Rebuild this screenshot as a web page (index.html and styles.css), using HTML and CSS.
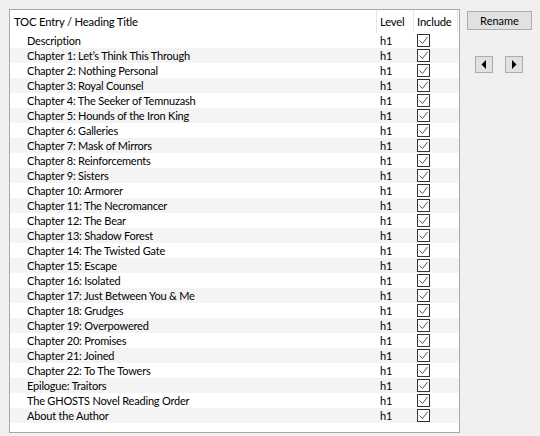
FILE: index.html
```html
<!DOCTYPE html>
<html>
<head>
<meta charset="utf-8">
<link rel="stylesheet" href="styles.css">
</head>
<body>
<div class="app">
  <div class="list">
    <div class="head">
      <div class="c-title">TOC Entry / Heading Title</div>
      <div class="c-level">Level</div>
      <div class="c-inc">Include</div>
      <div class="c-rest"></div>
    </div>
    <div class="rows" id="rows"></div>
  </div>
  <div class="side">
    <button class="btn rename">Rename</button>
    <div class="arrows">
      <button class="btn arrow"><svg width="6" height="9" viewBox="0 0 6 9"><polygon points="5,0 5,9 0.5,4.5" fill="#000"/></svg></button>
      <button class="btn arrow"><svg width="6" height="9" viewBox="0 0 6 9"><polygon points="1,0 1,9 5.5,4.5" fill="#000"/></svg></button>
    </div>
  </div>
</div>
<script src="app.js"></script>
</body>
</html>
```
FILE: app.js
```js
var items = [
  "Description",
  "Chapter 1: Let\u2019s Think This Through",
  "Chapter 2: Nothing Personal",
  "Chapter 3: Royal Counsel",
  "Chapter 4: The Seeker of Temnuzash",
  "Chapter 5: Hounds of the Iron King",
  "Chapter 6: Galleries",
  "Chapter 7: Mask of Mirrors",
  "Chapter 8: Reinforcements",
  "Chapter 9: Sisters",
  "Chapter 10: Armorer",
  "Chapter 11: The Necromancer",
  "Chapter 12: The Bear",
  "Chapter 13: Shadow Forest",
  "Chapter 14: The Twisted Gate",
  "Chapter 15: Escape",
  "Chapter 16: Isolated",
  "Chapter 17: Just Between You & Me",
  "Chapter 18: Grudges",
  "Chapter 19: Overpowered",
  "Chapter 20: Promises",
  "Chapter 21: Joined",
  "Chapter 22: To The Towers",
  "Epilogue: Traitors",
  "The GHOSTS Novel Reading Order",
  "About the Author"
];
var rows = document.getElementById("rows");
var check = '<svg width="11" height="11" viewBox="0 0 11 11"><polyline points="1.5,5.5 4.5,8.5 9.5,2" fill="none" stroke="#555" stroke-width="1"/></svg>';
items.forEach(function (t) {
  var r = document.createElement("div");
  r.className = "row";
  r.innerHTML = '<div class="c-title"></div><div class="c-level">h1</div><div class="c-inc"><span class="cb">' + check + '</span></div>';
  r.firstChild.textContent = t;
  rows.appendChild(r);
});
```
FILE: styles.css
```css
html, body {
  margin: 0;
  padding: 0;
  background: #f0f0f0;
}
body {
  font-family: Lato, "Noto Sans", sans-serif;
  font-size: 11px;
  letter-spacing: -0.2px;
  color: #000;
}
.app {
  display: flex;
  padding: 9px 0 0 9px;
  gap: 7px;
}
.list {
  width: 449px;
  height: 422px;
  border: 1px solid #a8a8a8;
  background: #fff;
  box-sizing: content-box;
  overflow: hidden;
}
.head {
  display: flex;
  height: 23px;
  align-items: stretch;
  font-size: 11.3px;
}
.head > div {
  display: flex;
  align-items: center;
  border-right: 1px solid #e5e5e5;
  box-sizing: border-box;
  line-height: 14px;
}
.head .c-title {
  width: 367px;
  padding-left: 4px;
}
.head .c-level {
  width: 37px;
  padding-left: 3px;
}
.head .c-inc {
  width: 44px;
  padding-left: 3px;
}
.head .c-rest {
  flex: 1;
  border-right: none;
}
.row {
  display: flex;
  height: 15px;
  align-items: center;
}
.row > div {
  line-height: 14px;
  box-sizing: border-box;
}
.row:nth-child(even) {
  background: #f4f4f4;
}
.row .c-title {
  width: 367px;
  padding-left: 17px;
  white-space: nowrap;
}
.row .c-level {
  width: 37px;
  padding-left: 3px;
}
.row .c-inc {
  width: 44px;
  padding-left: 3px;
  display: flex;
  align-items: center;
}
.cb {
  width: 13px;
  height: 13px;
  border: 1px solid #333;
  box-sizing: border-box;
  background: #fff;
  display: flex;
  align-items: center;
  justify-content: center;
}
.side {
  display: flex;
  flex-direction: column;
  padding-top: 2px;
}
.btn {
  font-family: inherit;
  font-size: 11px;
  letter-spacing: 0;
  background: #e1e1e1;
  border: 1px solid #adadad;
  padding: 0;
  margin: 0;
  color: #000;
}
.rename {
  width: 65px;
  height: 19px;
  line-height: 17px;
}
.arrows {
  display: flex;
  gap: 12px;
  margin-top: 26px;
  padding-left: 8px;
}
.arrow {
  width: 18px;
  height: 17px;
  display: flex;
  align-items: center;
  justify-content: center;
}
```
